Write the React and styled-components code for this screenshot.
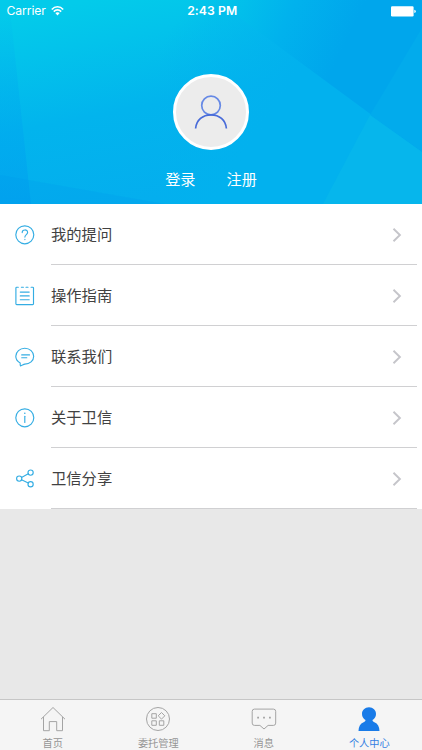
import styled, { createGlobalStyle } from "styled-components";

const GlobalStyle = createGlobalStyle`
  body {
    margin: 0;
    background: #e8e8e8;
    font-family: Inter, "Noto Sans CJK SC", sans-serif;
  }

  * {
    box-sizing: border-box;
  }

  svg {
    display: block;
    flex-shrink: 0;
  }
`;

const Screen = styled.div`
  display: flex;
  flex-direction: column;
  width: 422px;
  height: 750px;
  overflow: hidden;
  background: #e8e8e8;
`;

const Header = styled.header`
  position: relative;
  display: flex;
  flex-direction: column;
  align-items: center;
  height: 204px;
  flex-shrink: 0;
  color: #fff;
`;

const Backdrop = styled.svg`
  position: absolute;
  inset: 0;
`;

const StatusBar = styled.div`
  position: relative;
  display: grid;
  grid-template-columns: 1fr auto 1fr;
  align-items: center;
  width: 100%;
  height: 22px;
  padding: 0 6px 0 6.5px;
  font-size: 12.2px;
  line-height: 22px;
`;

const Carrier = styled.div`
  display: flex;
  align-items: center;
  gap: 5px;
  letter-spacing: -0.1px;
`;

const Time = styled.div`
  padding-left: 2px;
  font-weight: 600;
  letter-spacing: 0.1px;
`;

const Battery = styled.svg`
  justify-self: end;
`;

const Avatar = styled.div`
  position: relative;
  display: flex;
  align-items: center;
  justify-content: center;
  width: 76px;
  height: 76px;
  margin-top: 52px;
  border: 3px solid #fff;
  border-radius: 50%;
  background: #ececec;
`;

const Links = styled.div`
  position: relative;
  display: flex;
  gap: 31px;
  margin-top: 17px;
`;

const Link = styled.a`
  font-family: "Noto Sans CJK SC", sans-serif;
  font-size: 15.2px;
  line-height: 22px;
  cursor: pointer;
`;

const Menu = styled.div`
  flex-shrink: 0;
  height: 305px;
  background: #fff;
`;

const Row = styled.div`
  display: flex;
  align-items: center;
  height: 61px;
  padding: 0 5px 0 15px;
`;

const RowBody = styled.div`
  display: flex;
  flex: 1;
  align-items: center;
  justify-content: space-between;
  height: 100%;
  margin-left: 16px;
  padding-right: 15px;
  border-bottom: 1px solid #d0d0d2;
`;

const RowLabel = styled.span`
  padding-bottom: 2px;
  color: #414141;
  font-family: "Noto Sans CJK SC", sans-serif;
  font-size: 15.3px;
  line-height: 22px;
`;

const TabBar = styled.nav`
  display: grid;
  grid-template-columns: repeat(4, 1fr);
  height: 51px;
  margin-top: auto;
  border-top: 1px solid #c6c6c6;
  background: #f5f5f5;
`;

const Tab = styled.div`
  display: flex;
  flex-direction: column;
  align-items: center;
  padding-top: 6px;
  color: ${({ $active }) => ($active ? "#197be8" : "#a4a4a4")};
`;

const TabLabel = styled.span`
  margin-top: 4px;
  color: ${({ $active }) => ($active ? "#347fe2" : "#969696")};
  font-family: "Noto Sans CJK SC", sans-serif;
  font-size: 10.2px;
  line-height: 14px;
`;

const HeaderBackdrop = () => (
  <Backdrop width="422" height="204" viewBox="0 0 422 204">
    <defs>
      <linearGradient id="sky" gradientUnits="userSpaceOnUse" x1="90" y1="0" x2="130" y2="204">
        <stop offset="0" stopColor="#03cbea" />
        <stop offset="0.2" stopColor="#03c3eb" />
        <stop offset="0.55" stopColor="#02b4ed" />
        <stop offset="1" stopColor="#04aeee" />
      </linearGradient>
      <linearGradient id="corner" gradientUnits="userSpaceOnUse" x1="225" y1="0" x2="340" y2="55">
        <stop offset="0" stopColor="#02c4ea" />
        <stop offset="0.5" stopColor="#01b2ed" />
        <stop offset="1" stopColor="#00a6ec" />
      </linearGradient>
      <linearGradient id="fade" gradientUnits="userSpaceOnUse" x1="190" y1="0" x2="300" y2="70">
        <stop offset="0" stopColor="#02b2ee" stopOpacity="0" />
        <stop offset="1" stopColor="#02b1ee" />
      </linearGradient>
      <linearGradient id="strip" x1="0" y1="0" x2="0" y2="1">
        <stop offset="0" stopColor="#00a2f0" stopOpacity="0" />
        <stop offset="0.5" stopColor="#00a2f0" stopOpacity="0.3" />
        <stop offset="1" stopColor="#009bf0" stopOpacity="0.5" />
      </linearGradient>
    </defs>
    <rect width="422" height="204" fill="url(#sky)" />
    <rect x="160" width="262" height="204" fill="url(#fade)" />
    <path d="M222 0H422V152L240 18Z" fill="url(#corner)" />
    <path d="M422 28V152L370 115Z" fill="#02abec" />
    <path d="M370 115L422 152V204H323Z" fill="#06b6ec" />
    <path d="M0 0H9L31 204H0Z" fill="url(#strip)" />
    <path d="M0 175L165 204H0Z" fill="#0094ee" fillOpacity="0.22" />
  </Backdrop>
);

const WifiIcon = () => (
  <svg width="13" height="10" viewBox="0 0 13 10" fill="none" stroke="#fff" strokeWidth="1.6">
    <path d="M.8 3.5C4-.1 9-.1 12.2 3.5M2.8 5.6C5 3.3 8 3.3 10.2 5.6" />
    <path d="M4.3 7.1Q6.5 5.2 8.7 7.1L6.5 9.4Z" fill="#fff" stroke="none" />
  </svg>
);

const BatteryIcon = () => (
  <Battery width="25" height="11" viewBox="0 0 25 11" fill="#fff">
    <rect x="0" y="0.3" width="22.6" height="10.2" rx="1.2" />
    <path d="M23.3 3.7Q24.8 4 24.8 5.4Q24.8 6.8 23.3 7.1Z" />
  </Battery>
);

const AvatarIcon = () => (
  <svg width="36" height="36" viewBox="0 0 36 36" fill="none" strokeWidth="1.7">
    <circle cx="18" cy="11.5" r="9.3" stroke="#6689e5" />
    <path d="M2.6 34.5C3.4 25.8 9.7 20.8 18 20.8S32.6 25.8 33.4 34.5" stroke="#486bd9" />
  </svg>
);

const LineIcon = ({ children }) => (
  <svg
    width="20"
    height="20"
    viewBox="0 0 20 20"
    fill="none"
    stroke="#34ade3"
    strokeWidth="1.15"
    strokeLinecap="round"
    strokeLinejoin="round"
  >
    {children}
  </svg>
);

const Chevron = () => (
  <svg width="10" height="16" viewBox="0 0 10 16" fill="none" stroke="#c5c5ca" strokeWidth="1.9">
    <path d="M1.5 2.8L7.9 9L1.5 15.2" />
  </svg>
);

const menuItems = [
  {
    label: "我的提问",
    icon: (
      <>
        <circle cx="9.8" cy="9.8" r="9" />
        <path d="M7.2 7.6C7.2 4.1 12.6 4.1 12.6 7.4C12.6 9.6 9.9 9.6 9.9 12.1M9.9 14.2V14.6" />
      </>
    ),
  },
  {
    label: "操作指南",
    icon: (
      <>
        <path d="M3.3 1.2H1.7Q.9 1.2.9 2V17.8Q.9 18.6 1.7 18.6H17.7Q18.5 18.6 18.5 17.8V2Q18.5 1.2 17.7 1.2H16.1M6.4 1.2H8.4M11 1.2H13" />
        <path d="M5.3 6.1H14.2M5.3 9.9H14.2M5.3 13.7H14.2" />
      </>
    ),
  },
  {
    label: "联系我们",
    icon: (
      <>
        <path d="M5.2 16.1C2.5 14.6.8 12.2.8 9.3C.8 4.8 4.8 1.2 9.8 1.2S18.7 4.8 18.7 9.3S14.8 17 9.8 17.1C8.5 17.5 7.1 18.3 5.5 18.9C5.1 18.4 5.1 17.2 5.2 16.1Z" />
        <path d="M6.7 7.9H14.5M6.7 10.7H11.8" />
      </>
    ),
  },
  {
    label: "关于卫信",
    icon: (
      <>
        <circle cx="9.8" cy="9.8" r="9" />
        <path d="M9.8 8.3V14.5" />
        <circle cx="9.8" cy="5.3" r="0.8" fill="#34ade3" stroke="none" />
      </>
    ),
  },
  {
    label: "卫信分享",
    icon: (
      <>
        <circle cx="4.2" cy="9.6" r="2.6" />
        <circle cx="15.6" cy="3.6" r="2.6" />
        <circle cx="15.6" cy="15.2" r="2.6" />
        <path d="M6.5 8.4L13.3 4.8M6.5 10.8L13.3 14" />
      </>
    ),
  },
];

const tabs = [
  {
    label: "首页",
    icon: <path d="M1 13.2L13 1.5L25 13.2M3.5 11V24.7H9.3V15.6H16.7V24.7H22.5V11" />,
  },
  {
    label: "委托管理",
    icon: (
      <>
        <circle cx="13" cy="13" r="11.5" />
        <path d="M6.8 7.7H11.3V12.2H6.8ZM6.8 14.8H11.3V19.3H6.8ZM14.3 14.8H18.8V19.3H14.3ZM16.5 6.5L19.8 9.8L16.5 13.1L13.2 9.8Z" />
      </>
    ),
  },
  {
    label: "消息",
    icon: (
      <>
        <path d="M3.4 3.1H22.4Q24.7 3.1 24.7 5.4V17.1Q24.7 19.4 22.4 19.4H17.1L13 23L8.9 19.4H3.4Q1.2 19.4 1.2 17.1V5.4Q1.2 3.1 3.4 3.1Z" />
        <path d="M6.2 11.7H8M12.1 11.7H13.9M18 11.7H19.8" strokeWidth="1.8" />
      </>
    ),
  },
  {
    label: "个人中心",
    active: true,
    icon: (
      <path
        d="M13 1.3C8.9 1.3 6 4.3 6 8C6 10.7 7.4 12.7 9.5 14.1C9.5 15.2 8.9 15.7 7.6 16.2C4.2 17.6 2.6 20.6 2.5 25H23.5C23.4 20.6 21.8 17.6 18.4 16.2C17.1 15.7 16.5 15.2 16.5 14.1C18.6 12.7 20 10.7 20 8C20 4.3 17.1 1.3 13 1.3Z"
        fill="currentColor"
        stroke="none"
      />
    ),
  },
];

const App = () => {
  return (
    <>
      <GlobalStyle />
      <Screen>
        <Header>
          <HeaderBackdrop />
          <StatusBar>
            <Carrier>
              Carrier
              <WifiIcon />
            </Carrier>
            <Time>2:43 PM</Time>
            <BatteryIcon />
          </StatusBar>
          <Avatar>
            <AvatarIcon />
          </Avatar>
          <Links>
            <Link>登录</Link>
            <Link>注册</Link>
          </Links>
        </Header>
        <Menu>
          {menuItems.map((item) => (
            <Row key={item.label}>
              <LineIcon>{item.icon}</LineIcon>
              <RowBody>
                <RowLabel>{item.label}</RowLabel>
                <Chevron />
              </RowBody>
            </Row>
          ))}
        </Menu>
        <TabBar>
          {tabs.map((tab) => (
            <Tab key={tab.label} $active={tab.active}>
              <svg width="26" height="26" viewBox="0 0 26 26" fill="none" stroke="currentColor" strokeWidth="1">
                {tab.icon}
              </svg>
              <TabLabel $active={tab.active}>{tab.label}</TabLabel>
            </Tab>
          ))}
        </TabBar>
      </Screen>
    </>
  );
};

export default App;
